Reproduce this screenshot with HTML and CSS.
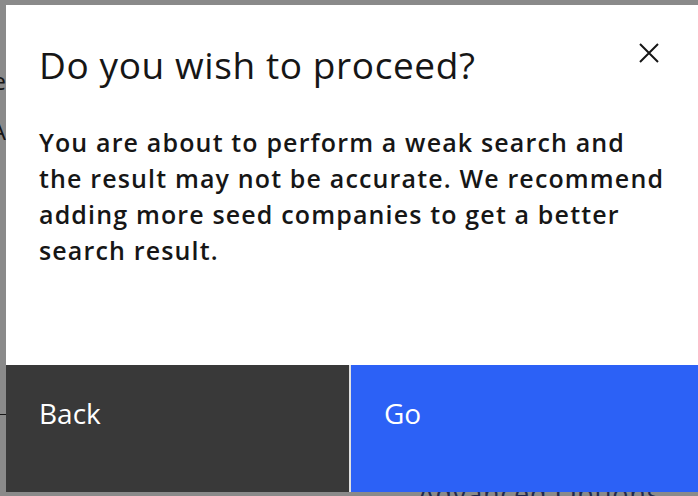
FILE: index.html
```html
<!DOCTYPE html>
<html lang="en">
<head>
  <meta charset="UTF-8" />
  <meta name="viewport" content="width=device-width, initial-scale=1.0" />
  <title>Do you wish to proceed?</title>
  <link rel="stylesheet" href="styles.css">
</head>
<body>
  <div class="page">
    <div class="page-side">
      <div class="side-label">Type</div>
      <div class="side-label second">VA</div>
      <div class="side-rule"></div>
    </div>
    <div class="page-main">
      <div class="advanced">Advanced Options <span class="chev">&#8964;</span></div>
    </div>
  </div>

  <div class="overlay">
    <div class="modal" role="dialog" aria-labelledby="modal-title">
      <div class="modal-header">
        <h2 id="modal-title" class="modal-title">Do you wish to proceed?</h2>
        <button class="modal-close" aria-label="Close">
          <svg width="20" height="20" viewBox="0 0 20 20" fill="none">
            <path d="M1 1L19 19M19 1L1 19" stroke="#161616" stroke-width="2"/>
          </svg>
        </button>
      </div>
      <div class="modal-body">
        <p>You are about to perform a weak search and the result may not be accurate. We recommend adding more seed companies to get a better search result.</p>
      </div>
      <div class="modal-footer">
        <button class="btn btn-secondary">Back</button>
        <button class="btn btn-primary">Go</button>
      </div>
    </div>
  </div>
</body>
</html>
```

FILE: styles.css
```css
html, body {
  margin: 0;
  height: 100%;
  overflow: hidden;
}
body {
  font-family: 'Open Sans', 'Noto Sans', sans-serif;
  color: #161616;
  background: #fff;
}
.page {
  display: flex;
  height: 100%;
}
.page-side {
  width: 6px;
  overflow: hidden;
  padding-top: 66px;
}
.side-label {
  font-size: 24px;
  line-height: 30px;
  direction: rtl;
  white-space: nowrap;
  color: #161616;
}
.side-label.second {
  margin-top: 20px;
}
.side-rule {
  margin-top: 268px;
  height: 1px;
  background: #161616;
}
.page-main {
  flex: 1;
  display: flex;
  align-items: flex-end;
  justify-content: flex-end;
}
.advanced {
  font-size: 27px;
  letter-spacing: 0.8px;
  color: #2a3a86;
  margin-bottom: -16px;
  margin-right: 6px;
  white-space: nowrap;
}
.overlay {
  position: fixed;
  inset: 0;
  background: rgba(22, 22, 22, 0.5);
}
.modal {
  position: absolute;
  left: 6px;
  top: 5px;
  width: 700px;
  height: 487px;
  background: #fff;
  display: flex;
  flex-direction: column;
}
.modal-header {
  display: flex;
  justify-content: space-between;
  align-items: flex-start;
  padding: 36px 47px 0 33px;
}
.modal-title {
  margin: 0;
  font-size: 37px;
  font-weight: 400;
  letter-spacing: 0.6px;
  line-height: 48px;
}
.modal-close {
  border: 0;
  background: none;
  padding: 0;
  margin-top: 2px;
  cursor: pointer;
  display: flex;
}
.modal-body {
  flex: 1;
  padding: 35px 33px 0 33px;
}
.modal-body p {
  margin: 0;
  font-size: 25px;
  font-weight: 600;
  letter-spacing: 1.15px;
  line-height: 36px;
  max-width: 630px;
}
.modal-footer {
  display: flex;
  gap: 2px;
  height: 127px;
  background: #e0e0e0;
}
.btn {
  border: 0;
  margin: 0;
  font-family: inherit;
  font-size: 28px;
  text-align: left;
  display: flex;
  align-items: flex-start;
  padding: 29px 33px 0 33px;
  color: #fff;
  cursor: pointer;
}
.btn-secondary {
  width: 343px;
  background: #393939;
}
.btn-primary {
  flex: 1;
  background: #2c61f6;
}
```
